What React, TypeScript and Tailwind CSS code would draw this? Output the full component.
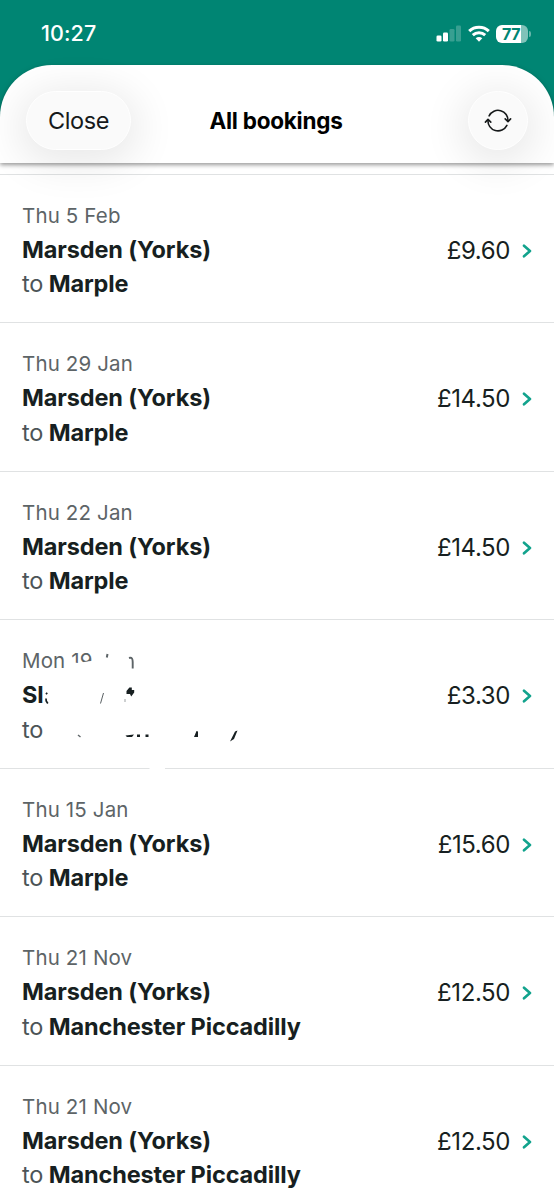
import type { ReactNode } from 'react';

interface Booking {
  date: string;
  from: string;
  to: string;
  price: string;
  obscured?: boolean;
}

const bookings: Booking[] = [
  { date: 'Thu 5 Feb', from: 'Marsden (Yorks)', to: 'Marple', price: '£9.60' },
  { date: 'Thu 29 Jan', from: 'Marsden (Yorks)', to: 'Marple', price: '£14.50' },
  { date: 'Thu 22 Jan', from: 'Marsden (Yorks)', to: 'Marple', price: '£14.50' },
  { date: 'Mon 19', from: 'Sl', to: '', price: '£3.30', obscured: true },
  { date: 'Thu 15 Jan', from: 'Marsden (Yorks)', to: 'Marple', price: '£15.60' },
  { date: 'Thu 21 Nov', from: 'Marsden (Yorks)', to: 'Manchester Piccadilly', price: '£12.50' },
  { date: 'Thu 21 Nov', from: 'Marsden (Yorks)', to: 'Manchester Piccadilly', price: '£12.50' },
];

function StatusBar() {
  return (
    <div className="flex h-[65px] items-center justify-between pr-[23px] pl-[41px] pt-[2px] text-white">
      <span className="text-[21.5px] font-medium tracking-[0.1px]">10:27</span>
      <div className="flex items-center gap-[6px]">
        <svg width="26" height="17" viewBox="0 0 26 17" fill="currentColor">
          <rect x="0.5" y="10.5" width="5" height="6" rx="1.3" />
          <rect x="7" y="7.5" width="5" height="9" rx="1.3" />
          <rect x="13.5" y="4" width="5" height="12.5" rx="1.3" opacity="0.22" />
          <rect x="20" y="0.5" width="5" height="16" rx="1.3" opacity="0.22" />
        </svg>
        <svg width="22" height="17" viewBox="0 0 22 17" fill="none" stroke="currentColor" strokeWidth="3">
          <path d="M1.2 6.1C6.5 .9 15.5 .9 20.8 6.1" />
          <path d="M4.8 10.2C8.3 6.9 13.7 6.9 17.2 10.2" />
          <path d="M11 16.8L7.7 13.3C9.6 11.6 12.4 11.6 14.3 13.3Z" fill="currentColor" stroke="none" />
        </svg>
        <div className="flex items-center gap-px">
          <div className="flex h-[18px] w-[32px] items-center overflow-hidden rounded-[6px] bg-[linear-gradient(90deg,#fff_78%,#80c2b9_78%)] pl-[6px]">
            <span className="text-[16px] leading-none font-bold tracking-[-0.3px] text-[#008573]">77</span>
          </div>
          <div className="h-[6px] w-[2px] rounded-r-full bg-[#66b6ab]" />
        </div>
      </div>
    </div>
  );
}

function GlassButton({ label, className, children }: { label: string; className: string; children: ReactNode }) {
  return (
    <button
      aria-label={label}
      className={`flex h-[59px] items-center justify-center rounded-full border-[1.5px] border-white bg-[#fafafa] shadow-[0_7px_40px_8px_rgba(0,0,0,0.09)] ${className}`}
    >
      {children}
    </button>
  );
}

function RefreshIcon() {
  return (
    <svg width="28" height="24" viewBox="0 0 28 24" fill="none" stroke="#16191a" strokeWidth="1.6" strokeLinecap="round" strokeLinejoin="round">
      <path d="M5.1 7.8A10 10 0 0 1 24 13" />
      <path d="M21.2 10.9L24 13.6L26.6 10.9" />
      <path d="M22.9 17.4A10 10 0 0 1 4 12.1" />
      <path d="M1.4 14.1L4 11.4L6.8 14.1" />
    </svg>
  );
}

function ErasedMarks() {
  return (
    <svg className="absolute top-0 left-0" width="260" height="149" viewBox="0 620 260 149">
      <path d="M68 661.7L78 663L94 660.5V674H68Z" fill="#fff" />
      <path d="M107.5 654L106.8 657.5" stroke="#5d6467" strokeWidth="2" />
      <path d="M129 658C132 657 132.7 659 132.7 662V668.5" fill="none" stroke="#5d6467" strokeWidth="1.9" />
      <path d="M47.2 692.8L46 694.3M46 698.5L46.2 701L47.8 703.5" fill="none" stroke="#171f21" strokeWidth="1.7" />
      <path d="M103.5 693L100.5 703.5" stroke="#596063" strokeWidth="1" />
      <path d="M129.4 687.5H131.8V690H134.2V692.5L131.2 696.5L130 694H126.5V691Z" fill="#171f21" />
      <path d="M125 699V702" stroke="#9ca1a3" strokeWidth="1" />
      <path d="M78 735L80.5 737" stroke="#60676a" strokeWidth="1.5" />
      <path d="M125.5 735.5L134 734.5L132 737H127Z M137 734.5H140V737H137Z M145.5 734.5H148.5V737H145.5Z M194 737L196.5 731L198 731.5V737Z M230 741.5L234 739L237.5 730.5L235 731.5Z" fill="#171f21" />
      <path d="M149.5 768.5H165" stroke="#fff" strokeWidth="3" />
    </svg>
  );
}

function BookingRow({ booking }: { booking: Booking }) {
  return (
    <li className="relative flex h-[148.5px] items-center justify-between border-b border-[#e0e2e3] pr-[22px] pl-[22px]">
      <div className="pt-[2.5px]">
        <p className="text-[20.5px] leading-[34px] tracking-[0.15px] text-[#5d6467]">{booking.date}</p>
        <p className="text-[23.5px] leading-[34.5px] font-bold tracking-[-0.12px] text-[#171f21]">{booking.from}</p>
        <p className="text-[23.5px] leading-[33px] font-bold tracking-[-0.13px] text-[#171f21]">
          <span className="font-normal text-[#4c5457]">to</span> {booking.to}
        </p>
      </div>
      <div className="flex items-center gap-[12px] pt-[5px]">
        <span className="text-[24px] leading-[34px] tracking-[-0.4px] text-[#171f21]">{booking.price}</span>
        <svg width="10" height="14" viewBox="0 0 10 14" fill="none" stroke="#12a38d" strokeWidth="2.6" strokeLinecap="round" strokeLinejoin="round">
          <path d="M2 1.7L8 7L2 12.3" />
        </svg>
      </div>
      {booking.obscured && <ErasedMarks />}
    </li>
  );
}

export default function App() {
  return (
    <div className="h-[1199px] w-[554px] overflow-hidden bg-white font-['Inter',sans-serif]">
      <div className="bg-[#008573]">
        <StatusBar />
        <header className="relative z-10 grid h-[98px] grid-cols-[1fr_auto_1fr] items-center rounded-t-[52px] bg-white px-[26px] pt-[13px] pb-[1px] shadow-[0_2px_4px_rgba(0,0,0,0.4)]">
          <GlassButton label="Close" className="w-[105px]">
            <span className="pt-[2px] text-[23.5px] tracking-[-0.4px] text-[#16191a]">Close</span>
          </GlassButton>
          <h1 className="pt-[2px] pr-[2px] text-[22.5px] font-bold tracking-[-0.25px] text-black">All bookings</h1>
          <GlassButton label="Refresh" className="w-[60px] justify-self-end">
            <RefreshIcon />
          </GlassButton>
        </header>
      </div>
      <div className="h-[11.5px] border-b border-[#e0e2e3]" />
      <ul>
        {bookings.map((booking, index) => (
          <BookingRow key={index} booking={booking} />
        ))}
      </ul>
    </div>
  );
}
